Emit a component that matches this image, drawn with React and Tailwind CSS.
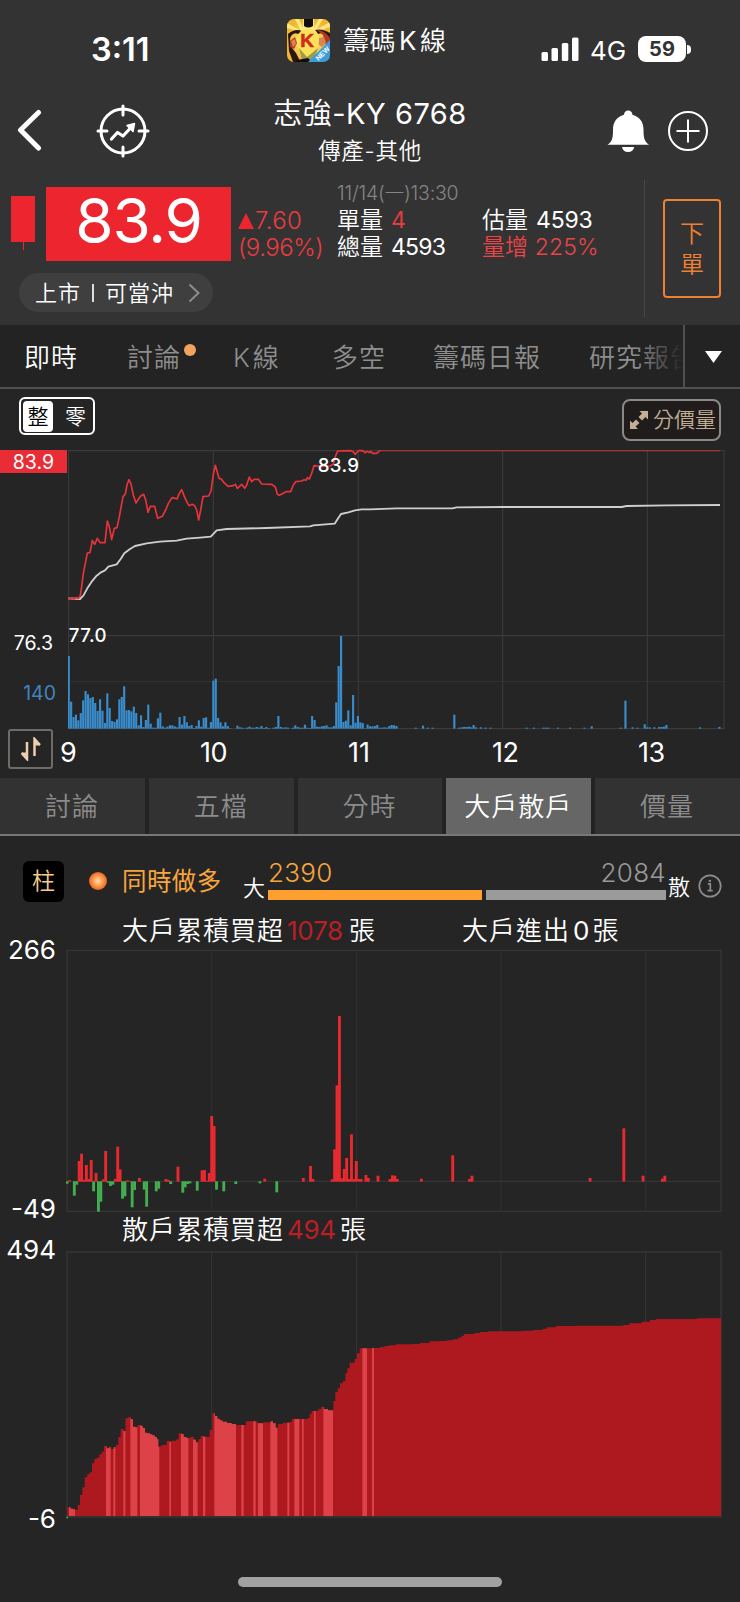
import React from 'react';
import clsx from 'clsx';

const mainTabs = [
  { label: '即時', width: 'w-[103px]', active: true },
  { label: '討論', width: 'w-[106px]', dot: true },
  { label: 'K線', width: 'w-[99px]' },
  { label: '多空', width: 'w-[101px]' },
  { label: '籌碼日報', width: 'w-[156px]' },
  { label: '研究報告', width: 'w-[110px]' },
];

const subTabs = ['討論', '五檔', '分時', '大戶散戶', '價量'];

// The charts use three drawing units per pixel, one minute is 7.23 units
const MINUTE = 7.23;
const hourLines = [640, 1075, 1508, 1942];

const priceLine =
  '205,640 210,643 216,638 222,641 228,638 236,640 241,632 245,605 250,565 257,530 262,504 270,503 277,466 284,478 292,460 300,473 315,473 322,408 328,425 335,464 343,430 351,428 358,395 369,335 376,327 381,300 387,284 393,297 400,330 408,354 415,343 422,333 431,328 437,345 444,382 451,364 464,364 473,400 487,394 497,375 505,355 516,338 525,340 531,342 538,325 545,314 552,332 560,350 567,362 577,358 584,362 590,375 596,405 602,375 609,335 626,333 633,318 640,268 646,241 652,262 657,280 664,282 672,293 684,304 700,302 706,298 712,310 718,305 725,298 734,310 740,300 748,276 755,290 762,283 775,283 785,297 815,298 826,306 832,328 838,331 847,326 858,320 872,320 880,300 887,290 905,288 912,284 918,286 922,278 928,282 935,265 942,242 955,243 970,244 990,243 1000,238 1006,215 1013,198 1050,197 1058,199 1066,208 1075,197 1088,197 1095,203 1102,199 1108,203 1112,199 1118,205 1130,205 1140,197';

const averageLine =
  '205,640 240,642 250,632 262,610 275,590 290,572 303,562 315,556 325,545 350,538 362,522 373,505 390,492 405,483 440,475 480,470 530,467 560,461 600,458 632,455 641,446 650,436 680,432 800,429 930,424 940,421 1004,416 1013,402 1023,387 1045,382 1065,376 1085,373 1110,373 1190,370 1357,370 1370,367 1510,366 1865,366 1880,363 2000,361 2160,360';

const volumes = [
  218, 81, 35, 42, 25, 47, 85, 113, 103, 92, 95, 77, 53, 88, 54, 17, 106, 62, 23, 20,
  28, 88, 95, 127, 55, 56, 52, 66, 47, 10, 40, 5, 26, 72, 15, 3, 3, 31, 48, 7,
  3, 6, 10, 10, 7, 4, 35, 12, 38, 19, 8, 11, 2, 8, 25, 6, 32, 34, 3, 20,
  144, 150, 32, 19, 7, 19, 8, 1, 0, 0, 9, 4, 3, 1, 3, 6, 3, 3, 5, 3,
  8, 2, 5, 2, 0, 3, 5, 38, 5, 3, 4, 3, 0, 3, 10, 5, 3, 3, 12, 3,
  2, 38, 26, 6, 5, 7, 8, 10, 4, 4, 8, 79, 188, 278, 20, 24, 55, 10, 101, 18,
  38, 19, 17, 1, 12, 7, 7, 8, 11, 3, 3, 4, 3, 8, 11, 10, 8,
];

const lateVolumes = [
  [144, 3], [147, 9], [149, 3], [151, 3], [160, 42], [162, 3], [163, 4], [164, 5], [165, 5], [166, 6], [167, 4], [168, 11],
  [169, 4], [171, 4], [173, 3], [175, 3], [190, 3], [193, 3], [197, 3], [198, 3], [199, 3], [203, 3], [208, 3], [214, 3],
  [217, 7], [229, 3], [231, 84], [234, 4], [236, 3], [239, 13], [240, 4], [241, 4], [243, 4], [245, 5], [246, 5], [247, 6],
  [248, 11], [262, 4], [270, 5],
];

const bigTrades = [
  [0, -7], [1, 4], [3, -43], [4, -10], [5, 62], [6, 84], [7, 6], [8, 50], [9, 8], [10, 65], [11, -30], [12, 26], [13, -91],
  [14, -61], [15, 7], [16, 92], [17, -4], [18, -14], [19, -10], [20, 8], [21, 105], [22, 37], [23, -52], [24, -45], [25, 4],
  [26, 2], [27, -78], [28, -26], [30, 11], [32, -25], [33, -76], [37, -30], [38, -22], [41, 8], [42, 5], [43, -8], [46, 45],
  [48, -34], [49, -18], [50, -8], [51, -6], [54, -28], [56, 34], [57, 35], [58, 3], [59, 26], [60, 197], [61, 167],
  [62, -25], [65, -30], [70, -8], [80, -6], [82, 9], [87, -33], [98, 11], [101, 47], [102, 8], [110, 7], [111, 97],
  [112, 289], [113, 497], [114, 10], [115, 38], [116, 71], [117, 8], [118, 142], [119, 8], [120, 62], [121, 8], [122, 8],
  [124, 20], [125, 11], [129, 18], [134, 8], [135, 19], [136, 18], [137, 8], [147, 9], [160, 79], [167, 8], [168, 18],
  [217, 11], [231, 160], [239, 18], [247, 9], [248, 18],
];

// [x, top] of every step of the accumulated retail area
const retailSteps = [
  [202, 922], [212, 926], [219, 928], [226, 930], [233, 915], [240, 885], [247, 862], [254, 832], [262, 822], [269, 817],
  [276, 790], [283, 777], [290, 773], [298, 763], [305, 755], [312, 738], [320, 745], [327, 742], [334, 747], [341, 742],
  [348, 735], [355, 712], [362, 687], [370, 693], [377, 655], [384, 652], [392, 658], [399, 680], [406, 682], [413, 675],
  [421, 677], [428, 684], [435, 698], [442, 700], [450, 703], [457, 706], [464, 711], [471, 718], [475, 740], [482, 736],
  [490, 734], [500, 722], [508, 725], [515, 722], [529, 718], [536, 700], [544, 702], [551, 711], [560, 714], [572, 711],
  [580, 719], [588, 727], [595, 718], [602, 708], [610, 710], [629, 690], [637, 640], [645, 648], [652, 656], [659, 661],
  [667, 665], [681, 669], [695, 672], [708, 675], [738, 664], [772, 670], [790, 667], [812, 664], [819, 670], [827, 683],
  [834, 672], [848, 668], [870, 665], [876, 657], [924, 654], [929, 641], [935, 633], [955, 627], [964, 621], [972, 627],
  [984, 631], [1000, 603], [1006, 576], [1013, 565], [1020, 550], [1028, 544], [1036, 520], [1042, 505], [1049, 488],
  [1064, 477], [1071, 460], [1079, 445], [1119, 444], [1140, 441], [1154, 438], [1168, 436], [1189, 433], [1240, 432],
  [1260, 429], [1288, 424], [1318, 423], [1340, 421], [1358, 418], [1374, 413], [1384, 407], [1392, 402], [1424, 399],
  [1440, 396], [1465, 394], [1570, 392], [1600, 390], [1628, 386], [1640, 382], [1668, 378], [1730, 377], [1870, 375],
  [1888, 370], [1925, 365], [1950, 360], [1968, 357], [2092, 355],
];

const retailStripes = [
  [207, 225], [318, 332], [340, 346], [370, 376], [391, 412], [420, 478], [508, 513], [543, 565], [579, 593], [609, 616],
  [643, 708], [724, 731], [760, 767], [774, 789], [811, 832], [862, 868], [883, 898], [906, 911], [942, 947], [970, 999],
  [1087, 1101], [1116, 1122],
];

const retailPath =
  retailSteps.map(([x, y], i) => (i === 0 ? `M${x} 948V${y}` : `H${x}V${y}`)).join('') + 'H2163V948Z';

const AppIcon = () => (
  <svg width="43" height="43" viewBox="0 0 43 43" className="mt-[19px] ml-[135px] shrink-0">
    <defs>
      <clipPath id="iconClip">
        <rect width="43" height="43" rx="7" />
      </clipPath>
      <radialGradient id="iconGlow">
        <stop offset="0" stopColor="#fff7a0" />
        <stop offset="1" stopColor="#f2b52c" />
      </radialGradient>
    </defs>
    <g clipPath="url(#iconClip)">
      <rect width="43" height="43" fill="url(#iconGlow)" />
      <path d="M0 4L14 12L8 0H12L16 9V0H27V9L32 0H36L29 11L43 3V8L28 13H15L0 9Z" fill="#fdea86" />
      <path d="M1 15Q8 9 15 12L11 15Q7 13 4 17L3 20L5 29L9 34L12 40L12 43H6L2 32ZM43 14Q35 9 28 11L31 15Q36 13 39 17L39 28L32 36V43H43Z" fill="#2b1710" />
      <path d="M30 11Q37 11 43 19V26L38 25L36 16ZM3 22L8 18L10 24L7 30L3 28Z" fill="#b23a20" />
      <path d="M32 19L37 18L39 24L35 28L31 25ZM4 22L8 20L9 25L6 28Z" fill="#dc8450" />
      <path d="M14 12Q21 8 29 12Q34 19 31 27Q25 35 21 41Q12 33 10 25Q9 17 14 12Z" fill="#f9e25a" />
      <path d="M12 29L20 38L31 29L27 41H15Z" fill="#a09a4c" />
      <path d="M17 0H26V7Q21 10 17 7ZM10 41L21 39L25 43H9Z" fill="#120d0b" />
      <text x="20" y="27.5" textAnchor="middle" fontFamily="Liberation Sans" fontWeight="700" fontSize="19" stroke="#cf2c1d" strokeWidth="0.6" fill="#cf2c1d">K</text>
      <path d="M43 21V43H21Z" fill="#3c9ddb" />
      <text transform="translate(31.5 42) rotate(-45)" fontFamily="Liberation Sans" fontWeight="700" fontSize="7" fill="#fff">NEW</text>
    </g>
  </svg>
);

const StatusBar = () => (
  <div className="flex h-[90px] items-start">
    <div className="mt-[34px] ml-[91px] w-[61px] text-[32.5px] leading-8 font-semibold">3:11</div>
    <AppIcon />
    <div className="mt-[25px] ml-[13px] w-[120px] text-[26px] leading-8 tracking-[0.5px] whitespace-nowrap">
      籌碼<span className="mx-[3px] font-normal">K</span>線
    </div>
    <svg width="38" height="25" viewBox="0 0 38 25" fill="#fff" className="mt-[37px] ml-[78px]">
      <rect x="0.5" y="15" width="6.5" height="9" rx="1.5" />
      <rect x="10.5" y="11" width="6.5" height="13" rx="1.5" />
      <rect x="20.8" y="6" width="6.5" height="18" rx="1.5" />
      <rect x="31" y="0.5" width="6.5" height="23.5" rx="1.5" />
    </svg>
    <div className="mt-[35px] ml-[11px] w-9 text-[26px] leading-8 font-normal">4G</div>
    <div className="mt-9 ml-3 flex items-center">
      <div className="flex h-[26px] w-[48px] items-center justify-center rounded-[8px] bg-white text-[20px] font-bold text-[#333]">59</div>
      <div className="ml-px h-[9px] w-[4px] rounded-r-full bg-white"></div>
    </div>
  </div>
);

const NavBar = () => (
  <div className="flex h-[90px] items-start">
    <svg width="26" height="44" viewBox="0 0 26 44" fill="none" stroke="#fff" strokeWidth="5" strokeLinecap="round" strokeLinejoin="round" className="mt-[18px] ml-4">
      <path d="M22.5 4.5L4.5 22L22.5 40" />
    </svg>
    <svg width="54" height="54" viewBox="0 0 54 54" fill="none" stroke="#fff" strokeWidth="3" strokeLinecap="round" className="mt-[14px] ml-[54px]">
      <circle cx="27" cy="27" r="22" />
      <path d="M27 2V11M27 43V52M2 27H11M43 27H52" />
      <path d="M15.5 35L21.5 28.5L27 32L34.5 24" strokeWidth="3.2" strokeLinejoin="round" />
      <path d="M31 21.5L38.5 19.5L37 27.5Z" fill="#fff" strokeWidth="1.5" strokeLinejoin="round" />
    </svg>
    <div className="mt-[6px] ml-[95px] w-[250px] text-center">
      <div className="text-[29px] leading-[36px] tracking-[0.5px] whitespace-nowrap">
        志強<span className="font-normal">-KY 6768</span>
      </div>
      <div className="mt-[5px] text-[22.5px] leading-7 tracking-[0.7px]">傳產-其他</div>
    </div>
    <svg width="44" height="46" viewBox="0 0 44 46" fill="#fff" className="mt-5 ml-[111px]">
      <path d="M18 4.8A4.2 4.2 0 0 1 26.4 4.8C34 7 37.5 12.5 37.5 19.5C37.5 27 38 31.5 43 34.8H1.5C6.5 31.5 7 27 7 19.5C7 12.5 10.5 7 18 4.8Z" />
      <path d="M16 37H28.2A6.2 6.2 0 0 1 16 37Z" />
    </svg>
    <svg width="42" height="42" viewBox="0 0 42 42" fill="none" stroke="#fff" strokeWidth="2" className="mt-5 ml-[17px]">
      <circle cx="21" cy="21" r="19" />
      <path d="M9.5 21H32.5M21 9.5V32.5" />
    </svg>
  </div>
);

const Quote = () => (
  <div className="flex h-[145px] items-start">
    <div className="w-[330px]">
      <div className="flex">
        <div className="mt-4 ml-[11px] flex w-[24px] flex-col items-center">
          <div className="h-[46px] w-full bg-[#ec252f]"></div>
          <div className="h-2 w-px bg-[#ec252f]"></div>
        </div>
        <div className="mt-[7px] ml-[11px] flex h-[74px] w-[185px] items-center justify-center bg-[#ec252f] pb-[7px] text-[62px] leading-none font-normal tracking-[-1.2px]">
          83.9
        </div>
        <div className="mt-[27px] ml-[7px] text-[24px] leading-[27px] text-[#ea3b40]">
          <div className="flex items-center">
            <svg width="16" height="16" viewBox="0 0 16 16" fill="#ec252f">
              <path d="M8 0L16 16H0Z" />
            </svg>
            <span className="ml-[1px] tracking-[0.3px]">7.60</span>
          </div>
          <div className="w-[90px] tracking-[-0.5px]">(9.96%)</div>
        </div>
      </div>
      <div className="mt-3 ml-[19px] flex h-[39px] w-[194px] items-center rounded-full bg-[#3f3f3f] pt-px pl-4">
        <span className="text-[22px] tracking-[1px]">上市</span>
        <span className="ml-[11px] h-[18px] w-[2px] bg-[#ddd]"></span>
        <span className="ml-[11px] text-[22px] tracking-[1px]">可當沖</span>
        <svg width="12" height="20" viewBox="0 0 12 20" fill="none" stroke="#8c8c8c" strokeWidth="2" className="ml-[14px]">
          <path d="M1.5 1.5L10.5 10L1.5 18.5" />
        </svg>
      </div>
    </div>
    <div className="w-[314px] pt-[2px] pl-[7px] text-[23px] leading-[27px]">
      <div className="h-[25px] text-[19.5px] leading-[23px] font-light tracking-[-0.2px] text-[#858585]">11/14(一)13:30</div>
      <div className="flex">
        <div className="w-[145px]">單量<span className="ml-2 font-normal text-[#df3d3f]">4</span></div>
        <div className="whitespace-nowrap">估量<span className="ml-2 font-normal tracking-[-0.2px]">4593</span></div>
      </div>
      <div className="flex">
        <div className="w-[145px]">總量<span className="ml-2 font-normal tracking-[-0.8px]">4593</span></div>
        <div className="tracking-[0.1px] text-[#ea4348]">量增 225%</div>
      </div>
    </div>
    <div className="h-[137px] w-px bg-[#484848]"></div>
    <button className="mt-[19px] ml-[18px] flex h-[99px] w-[58px] flex-col items-center justify-center rounded-[4px] border-2 border-[#ee8133] pt-px text-[24px] leading-[31px] text-[#ee8133]">
      <span>下</span>
      <span>單</span>
    </button>
  </div>
);

const MainTabs = () => (
  <div className="flex h-[64px] border-b-2 border-[#505050] bg-[#232323]">
    <div className="relative flex w-[683px] items-center overflow-hidden pt-[3px] pl-6">
      {mainTabs.map((tab) => (
        <button
          key={tab.label}
          className={clsx(
            'relative shrink-0 text-left text-[26px] leading-8 tracking-[1px] whitespace-nowrap',
            tab.width,
            tab.active ? 'text-white' : 'text-[#8e8e8e]'
          )}
        >
          {tab.label === 'K線' ? <><span className="mr-[2px]">K</span>線</> : tab.label}
          {tab.dot && <span className="absolute top-[2px] left-[57px] size-3 rounded-full bg-[#f3a35c]"></span>}
        </button>
      ))}
      <div className="absolute top-0 right-0 h-full w-12 bg-linear-to-r from-transparent to-[#232323]"></div>
    </div>
    <div className="flex flex-1 items-center justify-center border-l-2 border-[#505050] pt-[2px] pl-[2px]">
      <svg width="17" height="12" viewBox="0 0 17 12" fill="#fff">
        <path d="M0 0H17L8.5 12Z" />
      </svg>
    </div>
  </div>
);

const ChartToolbar = () => (
  <div className="flex h-[60px] items-start justify-between pr-[19px] pl-[19px]">
    <div className="mt-2 flex h-[38px] w-[76px] items-center rounded-[6px] border-2 border-white pl-[2px] text-[21px] leading-none">
      <span className="flex h-[31px] w-[30px] items-center justify-center rounded-[4px] bg-white text-black">整</span>
      <span className="ml-[12px]">零</span>
    </div>
    <button className="mt-[10px] flex h-[42px] w-[99px] items-center rounded-[8px] border-2 border-[#8c8984] bg-[#1f1c1b] pb-px pl-[5px] text-[21px] leading-none whitespace-nowrap text-[#c0ad96]">
      <svg width="20" height="20" viewBox="0 0 20 20" fill="#c6ad96">
        <path d="M10.5 1H19V9.5L16.5 7L13 10.5L9.5 7L13 3.5ZM9 19H1V10.5L3.5 13L7 9.5L10.5 13L6.5 16.5Z" />
      </svg>
      <span className="ml-1">分價量</span>
    </button>
  </div>
);

const PriceChart = () => (
  <div>
    <div className="flex h-[281px]">
      <div className="w-[68px] shrink-0 text-right text-[19.5px] leading-6 font-normal">
        <div className="mt-[1px] h-[23px] w-[67px] bg-[#e92d36] pr-[13px]">83.9</div>
        <div className="mt-[158px] pr-[15px]">76.3</div>
        <div className="mt-[26px] pr-[12px] text-[#4184bd]">140</div>
      </div>
      <svg width="672" height="281" viewBox="204 192 2016 843">
        <g stroke="#3b3b3b" strokeWidth="3.5" fill="none">
          <path d="M206 197H2172V1031H206Z" />
          <path d="M206 752H2172" />
          <path d="M206 889.5H2172" stroke="#303030" />
          {hourLines.map((x) => (
            <path key={x} d={`M${x} 197V1031`} />
          ))}
        </g>
        <g fill="#3a8dcc">
          {volumes.map((v, i) => (
            <rect key={i} x={203 + i * MINUTE} y={1031 - v} width="6.4" height={v} />
          ))}
          {lateVolumes.map(([i, v]) => (
            <rect key={i} x={203 + i * MINUTE} y={1031 - v} width="6.4" height={v} />
          ))}
        </g>
        <polyline points={averageLine} fill="none" stroke="#cfcfcf" strokeWidth="5.5" strokeLinejoin="round" />
        <polyline points={priceLine} fill="none" stroke="#e8333a" strokeWidth="5" strokeLinejoin="round" />
        <path d="M1140 197H2160" stroke="#a83238" strokeWidth="4" />
        <g fill="#fff" fontFamily="Inter" fontSize="56" fontWeight="500">
          <text x="953" y="260" textLength="124">83.9</text>
          <text x="206" y="770" textLength="114">77.0</text>
        </g>
      </svg>
    </div>
    <div className="flex h-[48px] items-start text-[27px] leading-8 font-normal">
      <button className="-mt-px ml-2 flex h-10 w-[45px] items-center justify-center rounded-[3px] border-2 border-[#6f6c68]">
        <svg width="20" height="24" viewBox="0 0 20 24" fill="none" stroke="#ecd0ae" strokeWidth="2.5">
          <path d="M6 5V22L0.5 16M13.5 19V2L19 8" />
          <path d="M0.5 15.5H6V23ZM19 8.5H13.5V1Z" fill="#ecd0ae" stroke="none" />
        </svg>
      </button>
      <span className="mt-[7px] ml-[7px] w-[140px]">9</span>
      <span className="mt-[7px] w-[148px] tracking-[-0.6px]">10</span>
      <span className="mt-[7px] w-[144px]">11</span>
      <span className="mt-[7px] w-[146px] tracking-[-0.6px]">12</span>
      <span className="mt-[7px] tracking-[-0.6px]">13</span>
    </div>
  </div>
);

const SubTabs = () => (
  <div className="grid h-[58px] grid-cols-5 gap-x-1 border-b-2 border-[#777] bg-[#232323]">
    {subTabs.map((label) => (
      <button
        key={label}
        className={clsx(
          'flex items-center justify-center pr-px text-[26px] tracking-[1px]',
          label === '大戶散戶' ? 'bg-[#666] text-white' : 'bg-[#323232] text-[#8c8c8c]'
        )}
      >
        {label}
      </button>
    ))}
  </div>
);

const Ratio = () => (
  <div className="flex h-[78px] items-start">
    <button className="mt-[25px] ml-[23px] flex size-[41px] items-center justify-center rounded-[6px] bg-black text-[23px] text-[#f7cf8c]">柱</button>
    <div className="mt-[36px] ml-[25px] size-[18px] rounded-full bg-[radial-gradient(circle,#ffdcae_0%,#ff9a4e_40%,#e35e17_75%,#93400f_100%)]"></div>
    <div className="mt-[29px] ml-[15px] w-[121px] text-[24.5px] leading-8 font-normal tracking-[0.4px] text-[#f8a63c]">同時做多</div>
    <div className="mt-[36px] w-[25px] text-[22px] leading-8">大</div>
    <div className="mt-[20px] w-[398px]">
      <div className="flex h-[34px] justify-between pt-px text-[26px] leading-8">
        <span className="tracking-[0.3px] text-[#f8a63c]">2390</span>
        <span className="tracking-[0.3px] text-[#9a9a9a]">2084</span>
      </div>
      <div className="flex gap-1">
        <div className="h-[10px] w-[214px] bg-[#ff9f30]"></div>
        <div className="h-[10px] flex-1 bg-[#9b9b9b]"></div>
      </div>
    </div>
    <div className="mt-[35px] ml-[2px] w-[30px] text-[22px] leading-8">散</div>
    <svg width="24" height="24" viewBox="0 0 24 24" fill="none" stroke="#8c8c8c" strokeWidth="1.7" className="mt-[38px]">
      <circle cx="12" cy="12" r="10.7" />
      <path d="M9.8 9.8H12.3V16.5M9.5 16.6H14.7" />
      <circle cx="11.9" cy="6.9" r="1.2" fill="#8c8c8c" stroke="none" />
    </svg>
  </div>
);

const Caption = ({ label, value, valueClass, className }) => (
  <div className={clsx('flex text-[26px] leading-8 tracking-[1px] whitespace-nowrap', className)}>
    {label}
    <span className={clsx('ml-[3px] font-normal', valueClass)}>{value}</span>張
  </div>
);

const BigTradeChart = () => (
  <div className="flex h-[265px]">
    <div className="flex w-[66px] shrink-0 flex-col justify-between pr-[10px] text-right text-[26px] leading-[30px] font-normal">
      <span className="-mt-[14px]">266</span>
      <span className="mb-[-10px]">-49</span>
    </div>
    <svg width="674" height="265" viewBox="198 328 2022 795">
      <g stroke="#353535" strokeWidth="4" fill="none">
        <path d="M201 332H2163V1115H201ZM201 1025H2163" />
        {hourLines.map((x) => (
          <path key={x} d={`M${x - 5} 332V1115`} strokeWidth="3" stroke="#303030" />
        ))}
      </g>
      {bigTrades.map(([i, v]) => (
        <rect
          key={i}
          x={197 + i * MINUTE}
          y={v > 0 ? 1026 - v : 1025}
          width="8.6"
          height={Math.abs(v)}
          fill={v > 0 ? '#e8292f' : '#43ad50'}
        />
      ))}
    </svg>
  </div>
);

const RetailChart = () => (
  <div className="flex h-[269px]">
    <div className="flex w-[66px] shrink-0 flex-col justify-between pr-[10px] text-right text-[26px] leading-[30px] font-normal">
      <span className="-mt-4">494</span>
      <span className="mb-[-14px]">-6</span>
    </div>
    <svg width="674" height="269" viewBox="198 153 2022 807">
      <clipPath id="retailArea">
        <path d={retailPath} />
      </clipPath>
      <g stroke="#363636" strokeWidth="4" fill="none">
        <path d="M201 156H2163V951H201Z" />
        {hourLines.map((x) => (
          <path key={x} d={`M${x - 5} 156V951`} strokeWidth="3" />
        ))}
      </g>
      <path d={retailPath} fill="#ae181f" />
      <g clipPath="url(#retailArea)" fill="#dc4247">
        {retailStripes.map(([from, to]) => (
          <rect key={from} x={from} y="400" width={to - from} height="548" />
        ))}
      </g>
      <rect x="199" y="950" width="5" height="5" fill="#43ad50" />
    </svg>
  </div>
);

const App = () => {
  return (
    <div className="h-[1602px] w-[740px] overflow-hidden bg-[#252525] font-['Inter','Noto_Sans_CJK_TC',sans-serif] font-[350] text-white">
      <header className="h-[325px] bg-[#333]">
        <StatusBar />
        <NavBar />
        <Quote />
      </header>
      <MainTabs />
      <ChartToolbar />
      <PriceChart />
      <SubTabs />

      <Ratio />
      <div className="flex h-[35px] pt-px">
        <Caption label="大戶累積買超" value="1078" valueClass="w-[62px] tracking-[-0.3px] text-[#ba1e27]" className="ml-[122px] w-[340px]" />
        <Caption label="大戶進出" value="0" valueClass="mr-[2px]" />
      </div>
      <BigTradeChart />
      <Caption label="散戶累積買超" value="494" valueClass="w-[53px] tracking-[-0.3px] text-[#ba1e27]" className="ml-[122px] h-[37px]" />
      <RetailChart />

      {/* Home indicator */}
      <div className="mx-auto mt-[57px] h-[10px] w-[264px] rounded-full bg-[#a2a2a2]"></div>
    </div>
  );
};

export default App;
